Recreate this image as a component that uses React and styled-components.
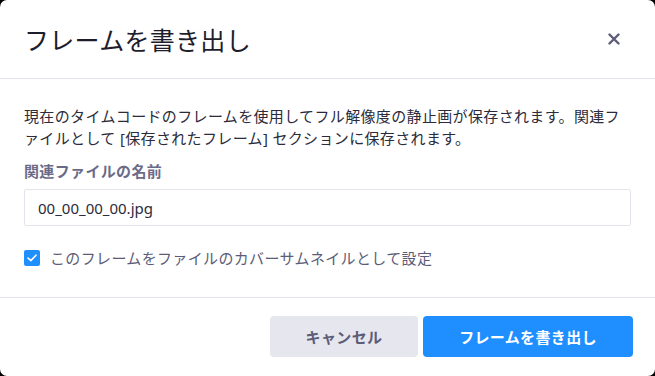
import React, { useState } from 'react';
import styled, { createGlobalStyle } from 'styled-components';

const GlobalStyle = createGlobalStyle`
	html, body {
		margin: 0;
		padding: 0;
		background: #000;
	}
	body {
		font-family: 'Noto Sans', 'Noto Sans CJK JP', sans-serif;
	}
`;

const Dialog = styled.div`
	width: 655px;
	height: 376px;
	background: #fff;
	border-radius: 7px;
	display: flex;
	flex-direction: column;
	overflow: hidden;
`;

const Header = styled.div`
	height: 79px;
	box-sizing: border-box;
	border-bottom: 1px solid #e4e4ec;
	display: flex;
	align-items: center;
	justify-content: space-between;
	padding: 0 31px 0 24px;
`;

const Title = styled.h1`
	margin: 0;
	font-size: 25px;
	font-weight: 400;
	letter-spacing: 0.3px;
	color: #1d1d2b;
	padding-bottom: 1px;
`;

const CloseButton = styled.button`
	border: none;
	background: none;
	padding: 0;
	width: 20px;
	height: 20px;
	display: flex;
	align-items: center;
	justify-content: center;
	cursor: pointer;
`;

const Body = styled.div`
	padding: 26px 24px 0 24px;
	flex: 1;
	border-bottom: 1px solid #e4e4ec;
`;

const Description = styled.p`
	margin: 0 0 11px;
	font-size: 15px;
	line-height: 22px;
	letter-spacing: 0.35px;
	color: #2b2b3b;
`;

const FieldLabel = styled.label`
	display: block;
	font-size: 15px;
	line-height: 22px;
	font-weight: 700;
	letter-spacing: 0.35px;
	color: #6b6b88;
	margin-bottom: 7px;
`;

const TextInput = styled.input`
	width: 100%;
	box-sizing: border-box;
	height: 37px;
	border: 1px solid #e4e4ec;
	border-radius: 2px;
	padding: 0 13px;
	font-family: inherit;
	font-size: 15px;
	color: #2b2b3b;
	outline: none;
`;

const CheckRow = styled.label`
	display: flex;
	align-items: center;
	gap: 10px;
	margin-top: 21px;
	font-size: 15px;
	letter-spacing: 0.35px;
	color: #5c5c78;
	cursor: pointer;
`;

const CheckBox = styled.span`
	width: 16px;
	height: 16px;
	border-radius: 2px;
	background: ${(p) => (p.checked ? '#1f8fff' : '#fff')};
	border: ${(p) => (p.checked ? 'none' : '1px solid #c4c4d4')};
	display: flex;
	align-items: center;
	justify-content: center;
	flex-shrink: 0;
`;

const Footer = styled.div`
	height: 78px;
	box-sizing: border-box;
	display: flex;
	justify-content: flex-end;
	align-items: flex-start;
	gap: 5px;
	padding: 18px 22px 0 0;
`;

const Button = styled.button`
	height: 41px;
	width: ${(p) => p.width}px;
	border: none;
	border-radius: 4px;
	font-family: inherit;
	font-size: 15px;
	font-weight: 700;
	letter-spacing: 0.35px;
	background: ${(p) => (p.primary ? '#1f8fff' : '#e6e6ee')};
	color: ${(p) => (p.primary ? '#fff' : '#5c5c78')};
	cursor: pointer;
`;

function App() {
	const [fileName, setFileName] = useState('00_00_00_00.jpg');
	const [asCover, setAsCover] = useState(true);

	return (
		<>
			<GlobalStyle />
			<Dialog>
				<Header>
					<Title>フレームを書き出し</Title>
					<CloseButton aria-label="閉じる">
						<svg width="12" height="12" viewBox="0 0 12 12">
							<path
								d="M1.5 1.5 L10.5 10.5 M10.5 1.5 L1.5 10.5"
								stroke="#5c5c78"
								strokeWidth="2.4"
								strokeLinecap="round"
							/>
						</svg>
					</CloseButton>
				</Header>
				<Body>
					<Description>
						現在のタイムコードのフレームを使用してフル解像度の静止画が保存されます。関連ファイルとして
						[保存されたフレーム] セクションに保存されます。
					</Description>
					<FieldLabel htmlFor="file-name">関連ファイルの名前</FieldLabel>
					<TextInput
						id="file-name"
						value={fileName}
						onChange={(e) => setFileName(e.target.value)}
					/>
					<CheckRow onClick={() => setAsCover(!asCover)}>
						<CheckBox checked={asCover}>
							{asCover && (
								<svg width="10" height="8" viewBox="0 0 10 8">
									<path
										d="M1 4 L3.8 6.6 L9 1.2"
										fill="none"
										stroke="#fff"
										strokeWidth="1.6"
										strokeLinecap="round"
										strokeLinejoin="round"
									/>
								</svg>
							)}
						</CheckBox>
						このフレームをファイルのカバーサムネイルとして設定
					</CheckRow>
				</Body>
				<Footer>
					<Button width={148}>キャンセル</Button>
					<Button primary width={210}>
						フレームを書き出し
					</Button>
				</Footer>
			</Dialog>
		</>
	);
}

export default App;
